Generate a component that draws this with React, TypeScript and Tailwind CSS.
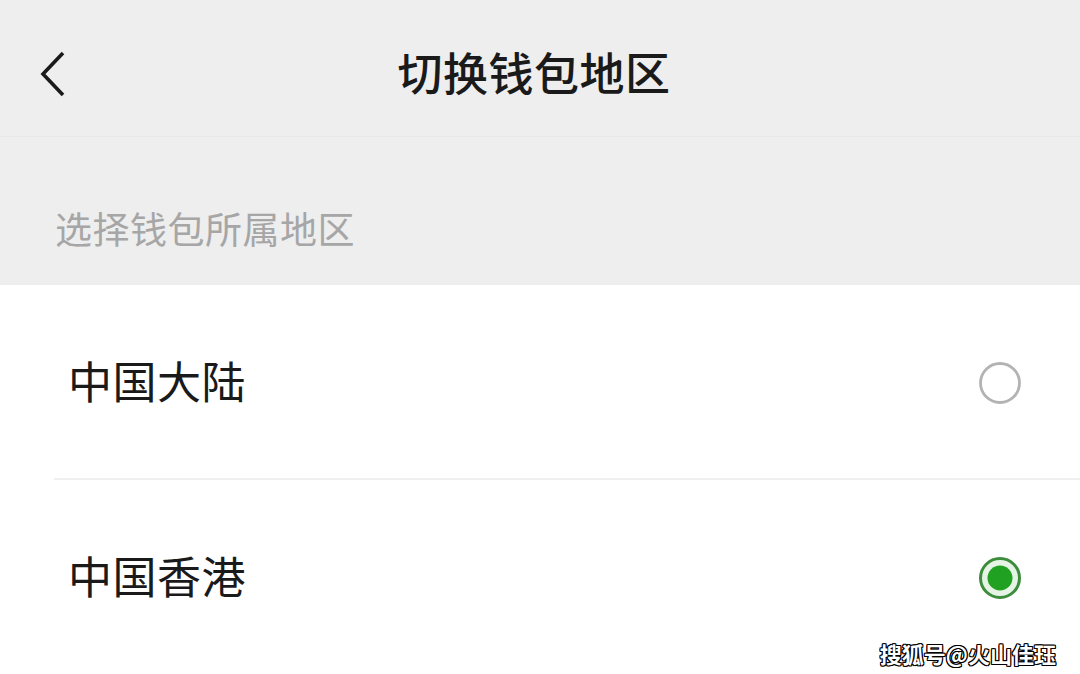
import React from "react";

const font = { fontFamily: '"Noto Sans CJK SC", "Noto Sans", sans-serif' };

function BackArrow() {
  return (
    <svg width="30" height="48" viewBox="0 0 30 48" fill="none">
      <path d="M25 3 L5 24 L25 45" stroke="#1a1a1a" strokeWidth="3.6" strokeLinecap="butt" strokeLinejoin="miter" />
    </svg>
  );
}

function Radio({ checked }: { checked: boolean }) {
  return checked ? (
    <svg width="46" height="46" viewBox="0 0 46 46">
      <circle cx="23" cy="23" r="19.5" fill="#e6f4e6" stroke="#3c8d3c" strokeWidth="3" />
      <circle cx="23" cy="23" r="12.5" fill="#21a121" />
    </svg>
  ) : (
    <svg width="46" height="46" viewBox="0 0 46 46">
      <circle cx="23" cy="23" r="19.5" fill="none" stroke="#b3b3b3" strokeWidth="2.8" />
    </svg>
  );
}

const regions = [
  { name: "中国大陆", checked: false },
  { name: "中国香港", checked: true },
];

export default function App() {
  return (
    <div className="relative w-[1080px] h-[674px] overflow-hidden bg-[#eeeeee] flex flex-col" style={font}>
      <header className="relative h-[137px] shrink-0 flex items-center justify-center border-b border-[#e8e8e8]">
        <button className="absolute left-[38px] top-[50px]">
          <BackArrow />
        </button>
        <h1 className="text-[45px] leading-none font-medium text-[#1a1a1a] mr-[12px] mt-[6px] tracking-[0.5px]">切换钱包地区</h1>
      </header>
      <div className="h-[148px] shrink-0 flex items-center pl-[55px] pt-[34px]">
        <span className="text-[37px] leading-none text-[#a6a6a6] tracking-[0.5px]">选择钱包所属地区</span>
      </div>
      <div className="flex-1 bg-white">
        {regions.map((r, i) => (
          <div key={r.name}>
            {i > 0 && <div className="ml-[54px] h-[2px] bg-[#efefef]" />}
            <div className="h-[193px] flex items-center justify-between pl-[68px] pr-[57px] pb-[4px]">
              <span className="text-[44px] leading-none text-[#1a1a1a] tracking-[0.5px]">{r.name}</span>
              <div className="mt-[6px]">
                <Radio checked={r.checked} />
              </div>
            </div>
          </div>
        ))}
      </div>
      <div
        className="absolute right-[24px] bottom-[10px] text-[22px] font-bold text-white leading-none"
        style={{ textShadow: "1px 1px 0 #000, -1px -1px 0 #000, 1px -1px 0 #000, -1px 1px 0 #000, 0 1px 0 #000, 1px 0 0 #000, 0 -1px 0 #000, -1px 0 0 #000" }}
      >
        搜狐号@火山佳珏
      </div>
    </div>
  );
}
